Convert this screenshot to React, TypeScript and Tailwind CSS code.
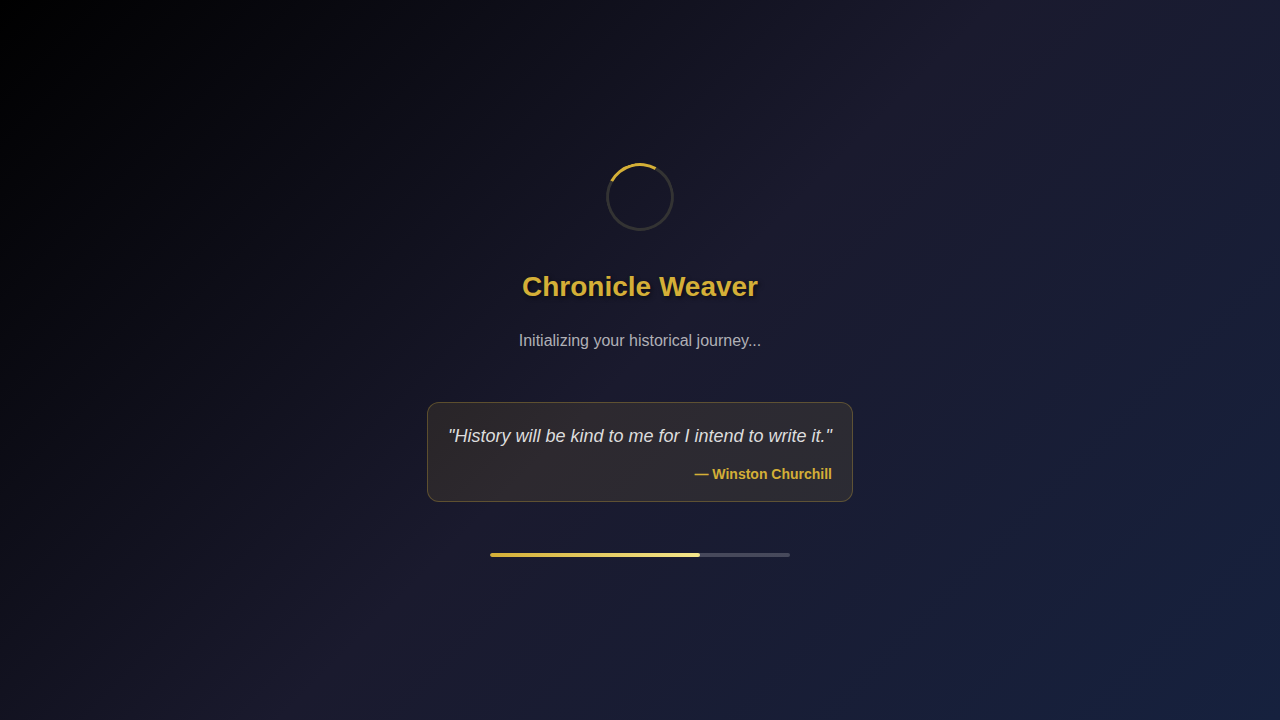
export default function App() {
  return (
    <div
      className="flex h-screen w-full flex-col items-center justify-center bg-[linear-gradient(135deg,#000000_0%,#1a1a2e_50%,#16213e_100%)]"
      style={{ fontFamily: '"Liberation Sans", Arial, sans-serif' }}
    >
      {/* spinner */}
      <div className="h-[68px] w-[68px] rotate-[-16deg] rounded-full border-[3px] border-[#333] border-t-[#d4af37]" />

      <h1 className="mt-[40px] text-[28px] font-bold leading-[32px] text-[#d4af37] [text-shadow:2px_2px_4px_rgba(0,0,0,0.5)]">
        Chronicle Weaver
      </h1>

      <p className="mt-[26px] text-base leading-6 text-[#b0b0b6]">
        Initializing your historical journey...
      </p>

      <div className="mt-[49px] h-[100px] w-[426px] rounded-xl border border-[rgba(212,175,55,0.3)] bg-[rgba(212,175,55,0.1)] px-5 pt-5">
        <p className="text-center text-lg italic leading-[26px] text-[#dddddd]">
          "History will be kind to me for I intend to write it."
        </p>
        <p className="mt-[16px] text-right text-sm font-bold leading-[18px] text-[#d4af37]">
          — Winston Churchill
        </p>
      </div>

      <div className="mt-[51px] h-1 w-[300px] overflow-hidden rounded-full bg-[rgba(255,255,255,0.2)]">
        <div className="h-full w-[70%] rounded-full bg-[linear-gradient(90deg,#d4af37,#f4e68c)]" />
      </div>
    </div>
  );
}
